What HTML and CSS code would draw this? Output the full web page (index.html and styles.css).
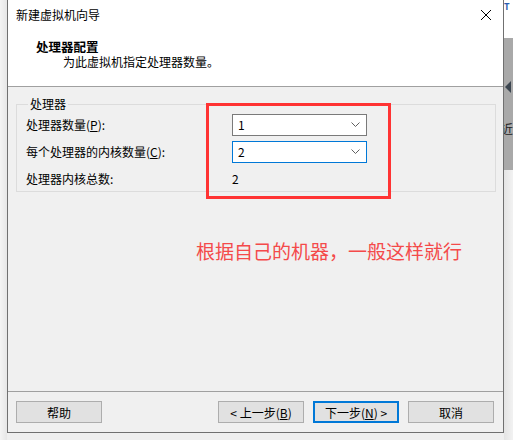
FILE: index.html
```html
<!DOCTYPE html>
<html lang="zh-CN">
<head>
  <meta charset="UTF-8">
  <title>新建虚拟机向导</title>
  <link rel="stylesheet" href="styles.css">
</head>
<body>

<div class="shadow-left"></div>
<div class="wizard">
  <div class="titlebar">
    <span class="title">新建虚拟机向导</span>
    <svg class="close" width="12" height="12" viewBox="0 0 12 12"><path d="M1 1 L11 11 M11 1 L1 11" stroke="#000" stroke-width="1" fill="none"/></svg>
  </div>
  <div class="header">
    <div class="header-title">处理器配置</div>
    <div class="header-sub">为此虚拟机指定处理器数量。</div>
  </div>
  <div class="content">
    <fieldset class="group">
      <legend>处理器</legend>
      <div class="row"><span class="label">处理器数量(<u>P</u>):</span><div class="combo"><span>1</span><svg width="9" height="5" viewBox="0 0 9 5"><path d="M0.5 0.5 L4.5 4.5 L8.5 0.5" stroke="#606060" fill="none"/></svg></div></div>
      <div class="row"><span class="label">每个处理器的内核数量(<u>C</u>):</span><div class="combo focus"><span>2</span><svg width="9" height="5" viewBox="0 0 9 5"><path d="M0.5 0.5 L4.5 4.5 L8.5 0.5" stroke="#606060" fill="none"/></svg></div></div>
      <div class="row"><span class="label">处理器内核总数:</span><span class="value">2</span></div>
      <div class="mark"></div>
    </fieldset>
    <div class="note">根据自己的机器，一般这样就行</div>
  </div>
  <div class="footer">
    <button class="btn">帮助</button>
    <div class="nav">
      <button class="btn">&lt; 上一步(<u>B</u>)</button>
      <button class="btn default">下一步(<u>N</u>) &gt;</button>
      <button class="btn">取消</button>
    </div>
  </div>
</div>
<div class="side">
  <div class="side-top"><span>T</span></div>
  <div class="side-mid"><span class="arrow"></span><span class="side-text">近</span></div>
  <div class="side-bottom"></div>
</div>

</body>
</html>
```

FILE: styles.css
```css
body { margin: 0; width: 513px; height: 440px; overflow: hidden; display: flex; align-items: flex-start; background-color: #efefef; font-family: "Noto Sans CJK SC", "Noto Sans", sans-serif; font-size: 12px; color: #000; }
.shadow-left { width: 7px; height: 440px; background: linear-gradient(to right, #f4f4f4, #e6e6e6); }
.wizard { width: 497px; height: 432px; border: 1px solid #707070; border-top: none; background-color: #f0f0f0; display: flex; flex-direction: column; }
.titlebar { height: 30px; background-color: #fff; display: flex; align-items: center; justify-content: space-between; padding: 0 10px 0 8px; }
.title { line-height: 30px; }
.close { margin-right: 1px; }
.header { height: 57px; background-color: #fff; border-bottom: 1px solid #a0a0a0; padding-left: 28px; box-sizing: border-box; }
.header-title { font-weight: bold; font-size: 12.5px; line-height: 16px; margin-top: 9px; }
.header-sub { padding-left: 27px; line-height: 14px; }
.content { flex: 1; position: relative; }
.group { position: relative; margin: 10px 0 0 8px; width: 480px; height: 95px; box-sizing: border-box; border: 1px solid #dcdcdc; padding: 0 0 0 9px; }
.group legend { padding: 0 2px 0 2px; margin-left: 2px; line-height: 14px; }
.row { display: flex; align-items: center; height: 27px; }
.row .label { width: 206px; }
.combo { width: 135px; height: 22px; box-sizing: border-box; border: 1px solid #7a7a7a; background-color: #fff; display: flex; align-items: center; justify-content: space-between; padding: 0 6px 0 5px; }
.combo.focus { border-color: #0078d7; }
.mark { position: absolute; left: 189px; top: -8px; width: 179px; height: 90px; border: 3px solid #f33; }
.note { margin: 47px 0 0 188px; font-size: 19px; line-height: 24px; color: #f44a4a; }
.footer { height: 41px; border-top: 1px solid #a0a0a0; display: flex; align-items: flex-start; justify-content: space-between; padding: 9px 9px 0 8px; box-sizing: border-box; }
.nav { display: flex; gap: 9px; }
.btn { width: 86px; height: 22px; box-sizing: border-box; border: 1px solid #adadad; background-color: #e1e1e1; font-family: inherit; font-size: 12px; padding: 0; color: #000; }
.btn.default { border: 2px solid #0078d7; }
.side { width: 9px; height: 440px; display: flex; flex-direction: column; }
.side-top { height: 38px; background-color: #fff; color: #2a5db0; font-size: 9px; font-weight: bold; overflow: hidden; }
.side-mid { height: 132px; background-color: #a9a9a9; position: relative; overflow: hidden; }
.arrow { position: absolute; left: 1px; top: 43px; width: 0; height: 0; border-top: 6px solid transparent; border-bottom: 6px solid transparent; border-right: 6px solid #3c4650; }
.side-text { position: absolute; left: -3px; top: 82px; font-size: 12px; color: #222; }
.side-bottom { flex: 1; background: linear-gradient(to right, #e4e4e4, #f2f2f2); }
```
